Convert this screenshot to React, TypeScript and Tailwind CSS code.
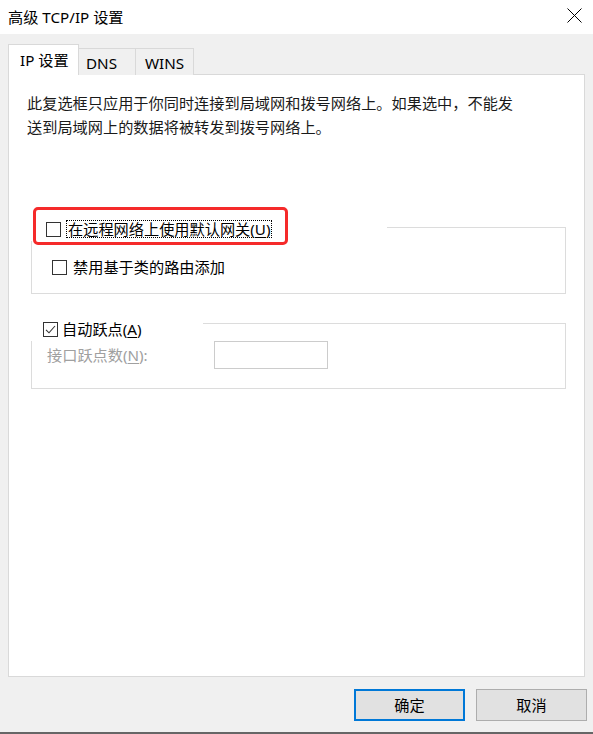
import React from "react";

const font = { fontFamily: '"Noto Sans", "Noto Sans CJK SC", sans-serif' };

const CheckBox: React.FC<{ checked?: boolean }> = ({ checked }) => (
  <div className="flex h-[15px] w-[15px] shrink-0 items-center justify-center border border-[#333333] bg-white">
    {checked && (
      <svg width="13" height="13" viewBox="0 0 13 13">
        <path d="M2 6.8 L5 9.8 L11 3" fill="none" stroke="#333333" strokeWidth="1.1" />
      </svg>
    )}
  </div>
);

const App: React.FC = () => {
  return (
    <div
      className="flex h-[734px] w-[593px] flex-col overflow-hidden bg-[#f0f0f0] text-[15.2px] text-black"
      style={font}
    >
      {/* title bar */}
      <div className="flex h-[34px] shrink-0 items-center justify-between bg-white pl-[8px] pr-[11px]">
        <span className="leading-[20px]">高级 TCP/IP 设置</span>
        <svg width="15" height="15" viewBox="0 0 15 15" className="mb-[4px]">
          <path d="M0.5 0.5 L14.5 14.5 M14.5 0.5 L0.5 14.5" stroke="#000" strokeWidth="1" />
        </svg>
      </div>

      {/* body */}
      <div className="flex flex-1 flex-col px-[8px] pt-[10px]">
        {/* tabs */}
        <div className="relative z-10 -mb-px flex items-end">
          <div className="flex h-[31px] w-[71px] items-center border border-b-0 border-[#d9d9d9] bg-white pb-[1px] pl-[11px] leading-[20px]">
            IP 设置
          </div>
          <div className="flex h-[27px] w-[57px] items-center border-r border-t border-[#d9d9d9] bg-[#f0f0f0] pl-[7px] pt-[2px] leading-[20px]">
            DNS
          </div>
          <div className="flex h-[27px] w-[58px] items-center border-r border-t border-[#d9d9d9] bg-[#f0f0f0] pl-[9px] pt-[2px] leading-[20px]">
            WINS
          </div>
        </div>

        {/* panel */}
        <div className="flex-1 border border-[#d9d9d9] bg-white pl-[18px] pr-[18px] pt-[16px]">
          <p className="leading-[24px] text-[#1a1a1a]">
            此复选框只应用于你同时连接到局域网和拨号网络上。如果选中，不能发
            <br />
            送到局域网上的数据将被转发到拨号网络上。
          </p>

          {/* group 1 */}
          <div className="relative ml-[4px] mt-[88px] border border-[#dcdcdc] pb-[16px] pl-[20px] pt-[29px]">
            <div className="absolute left-[-1px] top-[-11px] flex h-[24px] w-[356px] items-center gap-[5px] bg-white pl-[15px]">
              <CheckBox />
              <span className="border border-dotted border-black px-[1px] leading-[16px]">
                在远程网络上使用默认网关(<span className="underline underline-offset-2">U</span>)
              </span>
            </div>
            <div className="pointer-events-none absolute left-[1px] top-[-21px] h-[38px] w-[255px] rounded-[5px] border-[3px] border-[#f52a2a]" />
            <div className="flex h-[20px] items-center gap-[6px]">
              <CheckBox />
              <span className="leading-[20px]">禁用基于类的路由添加</span>
            </div>
          </div>

          {/* group 2 */}
          <div className="relative ml-[4px] mt-[29px] border border-[#dcdcdc] pb-[19px] pl-[15px] pt-[17px]">
            <div className="absolute left-[-1px] top-[-7px] flex h-[24px] w-[172px] items-center gap-[4px] bg-white pl-[12px]">
              <CheckBox checked />
              <span className="leading-[20px]">
                自动跃点(<span className="underline underline-offset-2">A</span>)
              </span>
            </div>
            <div className="flex h-[28px] items-center">
              <span className="w-[167px] leading-[20px] text-[#a0a0a0]">
                接口跃点数(<span className="underline underline-offset-2">N</span>):
              </span>
              <div className="h-[28px] w-[114px] border border-[#cccccc] bg-white" />
            </div>
          </div>
        </div>

        {/* buttons */}
        <div className="flex justify-end gap-[11px] pb-[11px] pt-[12px]">
          <button className="h-[32px] w-[111px] border-2 border-[#0078d7] bg-[#e1e1e1] leading-[20px]">
            确定
          </button>
          <button className="mr-[-2px] h-[32px] w-[111px] border border-[#adadad] bg-[#e1e1e1] leading-[20px]">
            取消
          </button>
        </div>
      </div>
      <div className="h-[2px] shrink-0 bg-[#666666]" />
    </div>
  );
};

export default App;
